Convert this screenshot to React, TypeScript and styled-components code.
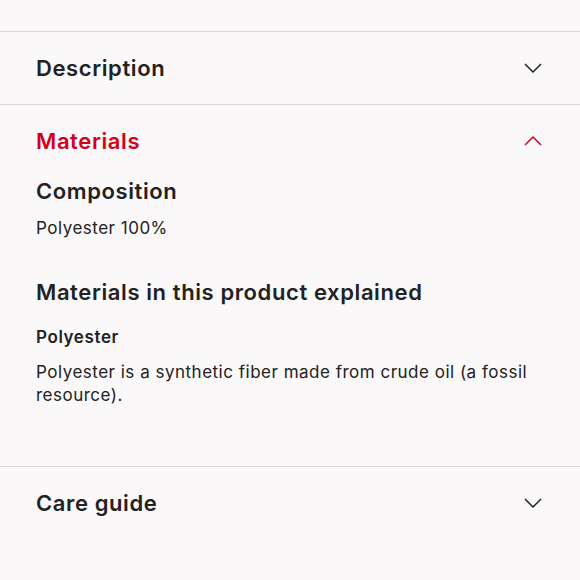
import styled, { createGlobalStyle } from "styled-components";
import { useState } from "react";

const GlobalStyle = createGlobalStyle`
  body {
    margin: 0;
    background: #faf8f8;
    font-family: Inter, "Open Sans", sans-serif;
    color: #222222;
  }
`;

type Section = { id: string; title: string };

const sections: Section[] = [
  { id: "description", title: "Description" },
  { id: "materials", title: "Materials" },
  { id: "care", title: "Care guide" },
];

const Chevron = ({ open }: { open: boolean }) => (
  <svg width="18" height="10" viewBox="0 0 18 10" fill="none">
    <path
      d={open ? "M1 9L9 1L17 9" : "M1 1L9 9L17 1"}
      stroke="currentColor"
      strokeWidth="1.5"
    />
  </svg>
);

const MaterialsBody = () => (
  <Body>
    <SubHeading>Composition</SubHeading>
    <Text>Polyester 100%</Text>
    <SubHeading top={37}>Materials in this product explained</SubHeading>
    <Label>Polyester</Label>
    <Text>
      Polyester is a synthetic fiber made from crude oil (a fossil resource).
    </Text>
  </Body>
);

const App = () => {
  const [open, setOpen] = useState("materials");
  return (
    <Page>
      <GlobalStyle />
      <Spacer />
      {sections.map((s) => {
        const isOpen = open === s.id;
        return (
          <Item key={s.id}>
            <Header active={isOpen} onClick={() => setOpen(isOpen ? "" : s.id)}>
              <Title>{s.title}</Title>
              <Chevron open={isOpen} />
            </Header>
            {isOpen && s.id === "materials" && <MaterialsBody />}
          </Item>
        );
      })}
    </Page>
  );
};

export default App;

const Page = styled.div`
  width: 100%;
  min-height: 100vh;
  background: #faf8f8;
`;

const Spacer = styled.div`
  height: 31px;
`;

const Item = styled.div`
  border-top: 1.5px solid #d8d6d6;
`;

const Header = styled.div<{ active: boolean }>`
  height: 72px;
  display: flex;
  align-items: center;
  justify-content: space-between;
  padding: 0 38px 0 36px;
  cursor: pointer;
  color: ${({ active }) => (active ? "#d0021b" : "#222222")};
`;

const Title = styled.span`
  font-size: 22px;
  font-weight: 600;
  letter-spacing: 0.6px;
`;

const Body = styled.div`
  padding: 0 38px 58px 36px;
`;

const SubHeading = styled.h3<{ top?: number }>`
  margin: ${({ top }) => top ?? 0}px 0 0;
  font-size: 22px;
  line-height: 28px;
  font-weight: 600;
  letter-spacing: 0.6px;
`;

const Label = styled.h4`
  margin: 19px 0 0;
  font-size: 17px;
  line-height: 24px;
  font-weight: 600;
  letter-spacing: 0.6px;
`;

const Text = styled.p`
  margin: 12px 0 0;
  font-size: 17px;
  line-height: 23.5px;
  letter-spacing: 0.5px;
`;
